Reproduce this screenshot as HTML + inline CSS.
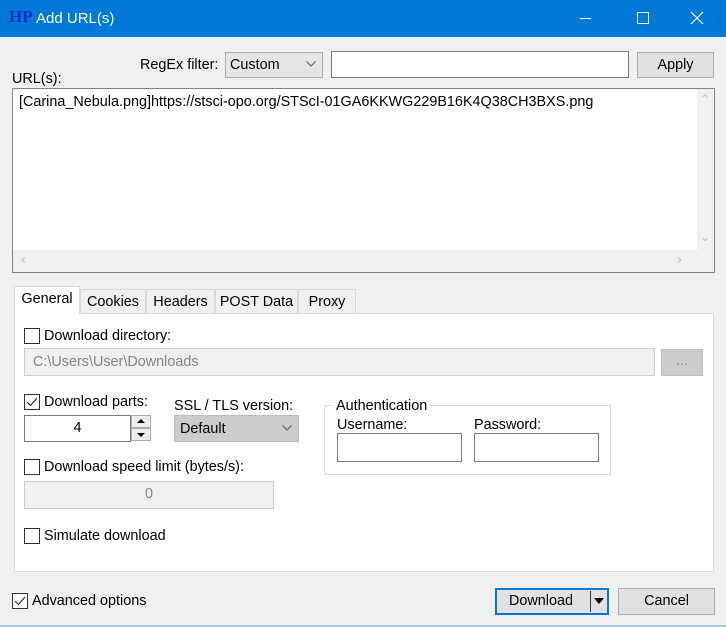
<!DOCTYPE html><html><head><style>
*{box-sizing:border-box}body{margin:0;width:726px;height:627px;background:#f0f0f0;font-family:"Liberation Sans",sans-serif;font-size:14.4px;color:#000;position:relative;overflow:hidden}
.a{position:absolute}
.tb{left:0;top:0;width:726px;height:37px;background:#0078d7;color:#fff;font-size:15px}
.box{background:#fff;border:1px solid #7a7a7a}
.btn{background:#e1e1e1;border:1px solid #adadad;text-align:center;line-height:25px}
.cb{width:16px;height:16px;border:1px solid #333;background:#fff}
.dis{background:#f0f0f0;border:1px solid #ccc;color:#838383}
.tab{border:1px solid #d9d9d9;border-bottom:none;background:#f0f0f0;text-align:center;line-height:24px}
</style></head><body>
<div class="a tb">
<div class="a" style="left:9px;top:7px;font-weight:bold;color:#1a2bd0;font-size:17px;font-family:'Liberation Serif',serif">HP</div>
<div class="a" style="left:36px;top:10px">Add URL(s)</div>
<div class="a" style="left:580px;top:18px;width:11px;height:1px;background:#fff"></div>
<div class="a" style="left:637px;top:12px;width:12px;height:12px;border:1px solid #fff"></div>
<svg class="a" style="left:690px;top:11px" width="14" height="14"><path d="M1 1L13 13M13 1L1 13" stroke="#fff" stroke-width="1.2"/></svg>
</div>
<div class="a" style="left:140px;top:57px">RegEx filter:</div>
<div class="a btn" style="left:225px;top:52px;width:98px;height:26px;text-align:left;padding-left:4px;background:#e5e5e5;border-color:#acacac">Custom</div>
<svg class="a" style="left:306px;top:61px" width="10" height="6"><path d="M0.5 0.5L5 5L9.5 0.5" fill="none" stroke="#555"/></svg>
<div class="a box" style="left:331px;top:51px;width:298px;height:27px"></div>
<div class="a btn" style="left:637px;top:52px;width:77px;height:26px">Apply</div>
<div class="a" style="left:12px;top:71px">URL(s):</div>
<div class="a box" style="left:12px;top:88px;width:703px;height:185px;border-color:#828282">
<div class="a" style="left:6px;top:5px;white-space:nowrap">[Carina_Nebula.png]https://stsci-opo.org/STScI-01GA6KKWG229B16K4Q38CH3BXS.png</div>
<div class="a" style="left:0;top:161px;width:701px;height:22px;background:#f0f0f0"></div>
<div class="a" style="left:684px;top:0;width:17px;height:161px;background:#f0f0f0"></div>
<div class="a" style="left:687px;top:3px;color:#bbb;font-size:12px">&#8963;</div>
<div class="a" style="left:687px;top:141px;color:#bbb;font-size:12px">&#8964;</div>
<div class="a" style="left:8px;top:163px;color:#bbb">&#8249;</div>
<div class="a" style="left:664px;top:163px;color:#bbb">&#8250;</div>
</div>
<div class="a" style="left:14px;top:313px;width:700px;height:259px;background:#fff;border:1px solid #d9d9d9"></div>
<div class="a tab" style="left:14px;top:286px;width:66px;height:28px;background:#fff;line-height:24px">General</div>
<div class="a tab" style="left:80px;top:289px;width:66px;height:24px">Cookies</div>
<div class="a tab" style="left:146px;top:289px;width:69px;height:24px">Headers</div>
<div class="a tab" style="left:215px;top:289px;width:83px;height:24px">POST Data</div>
<div class="a tab" style="left:298px;top:289px;width:58px;height:24px">Proxy</div>
<div class="a cb" style="left:24px;top:328px"></div><div class="a" style="left:44px;top:328px">Download directory:</div>
<div class="a dis" style="left:24px;top:348px;width:631px;height:28px;padding:5px 8px">C:\Users\User\Downloads</div>
<div class="a" style="left:661px;top:349px;width:42px;height:27px;background:#ccc;border:1px solid #bfbfbf;color:#888;text-align:center;line-height:22px">...</div>
<div class="a cb" style="left:24px;top:394px"></div>
<svg class="a" style="left:26px;top:397px" width="12" height="10"><path d="M1 5L4.5 8.5L11 1" fill="none" stroke="#333" stroke-width="1.2"/></svg>
<div class="a" style="left:44px;top:394px">Download parts:</div>
<div class="a box" style="left:24px;top:415px;width:107px;height:27px;text-align:center;line-height:25px">4</div>
<div class="a" style="left:131px;top:415px;width:20px;height:13px;border:1px solid #aaa;background:#eee"></div>
<div class="a" style="left:131px;top:428px;width:20px;height:13px;border:1px solid #aaa;background:#eee"></div>
<svg class="a" style="left:137px;top:419px" width="8" height="20"><path d="M0 4L4 0L8 4Z M0 14L8 14L4 18Z" fill="#000"/></svg>
<div class="a" style="left:174px;top:398px">SSL / TLS version:</div>
<div class="a" style="left:174px;top:415px;width:125px;height:27px;background:#ccc;border:1px solid #bcbcbc;padding:5px 5px">Default</div>
<svg class="a" style="left:282px;top:425px" width="10" height="6"><path d="M0.5 0.5L5 5L9.5 0.5" fill="none" stroke="#555"/></svg>
<div class="a" style="left:324px;top:405px;width:287px;height:70px;border:1px solid #dcdcdc"></div>
<div class="a" style="left:333px;top:398px;background:#fff;padding:0 3px">Authentication</div>
<div class="a" style="left:337px;top:417px">Username:</div>
<div class="a" style="left:474px;top:417px">Password:</div>
<div class="a box" style="left:337px;top:433px;width:125px;height:29px"></div>
<div class="a box" style="left:474px;top:433px;width:125px;height:29px"></div>
<div class="a cb" style="left:24px;top:459px"></div><div class="a" style="left:44px;top:459px">Download speed limit (bytes/s):</div>
<div class="a dis" style="left:24px;top:481px;width:250px;height:28px;text-align:center;line-height:25px">0</div>
<div class="a cb" style="left:24px;top:528px"></div><div class="a" style="left:44px;top:528px">Simulate download</div>
<div class="a cb" style="left:12px;top:593px"></div>
<svg class="a" style="left:14px;top:596px" width="12" height="10"><path d="M1 5L4.5 8.5L11 1" fill="none" stroke="#333" stroke-width="1.2"/></svg>
<div class="a" style="left:32px;top:593px">Advanced options</div>
<div class="a btn" style="left:495px;top:588px;width:114px;height:27px;border:2px solid #0078d7;text-align:left;padding-left:12px;line-height:23px">Download</div>
<div class="a" style="left:590px;top:591px;width:1px;height:21px;background:#333"></div>
<svg class="a" style="left:594px;top:598px" width="10" height="6"><path d="M0 0L10 0L5 6Z" fill="#000"/></svg>
<div class="a btn" style="left:618px;top:588px;width:97px;height:27px">Cancel</div>
<div class="a" style="left:0;top:625px;width:726px;height:2px;background:#99c9ef"></div>
</body></html>
